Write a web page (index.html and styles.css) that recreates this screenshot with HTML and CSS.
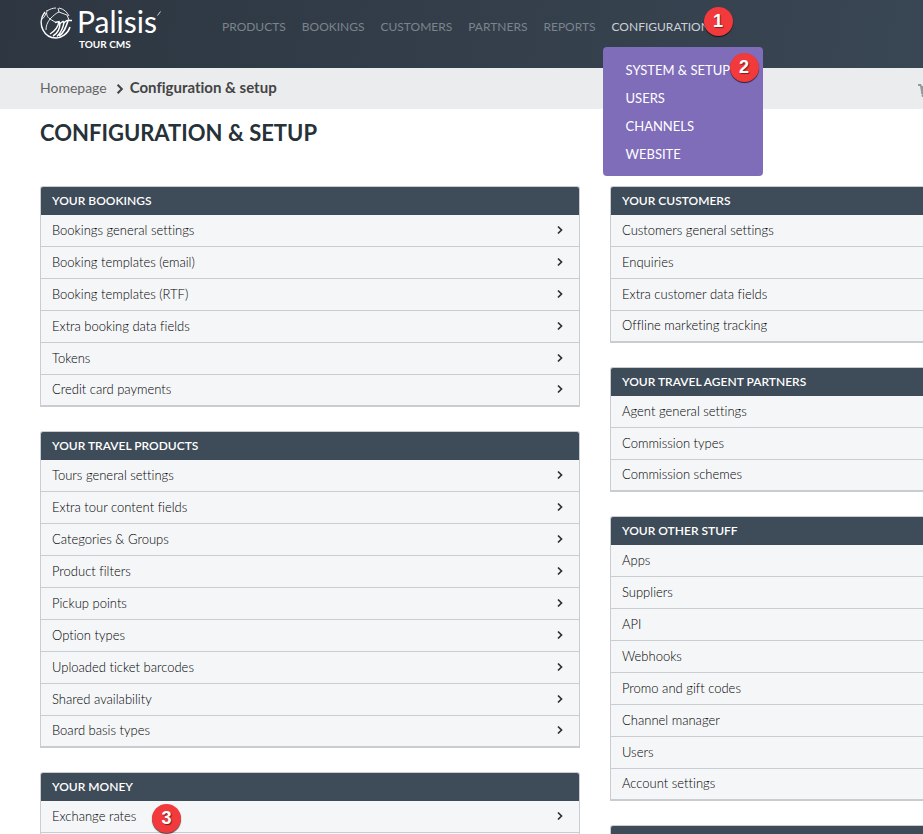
FILE: index.html
```
<!DOCTYPE html>
<html lang="en">
<head>
    <meta charset="UTF-8">
    <meta name="viewport" content="width=device-width, initial-scale=1.0">
    <title>Configuration & setup - TourCMS</title>
    <link rel="stylesheet" href="styles.css">
</head>
<body>
    <svg width="0" height="0" class="sprite">
        <symbol id="chevron" viewBox="0 0 8 10"><path d="M2 1.500L5.500 5L2 8.500" fill="none" stroke="currentColor" stroke-width="1.700"/></symbol>
    </svg>

    <header class="topbar">
        <a href="#" class="logo">
            <svg class="logo-mark" viewBox="0 0 33 33" fill="none" stroke="#fff">
                <path d="M5 5C1 10 0 17 3 23s8 8 13 8 12-4 14-11" stroke-width="1.500"/>
                <path d="M7 4c3-2 6-3 9-3M19 1c5 1 8 4 10 8" stroke-width="0.900"/>
                <path d="M7 3c-1 4 0 7 3 9 3-3 6-6 9-7l8 3 2 5M18 1l1 4M10 12l5 3M10 12c-3 4-4 7-4 11M1 13c3-2 4-4 5-7" stroke-width="0.900"/>
                <path d="M15 15.500l4-1 1 2 3-2 1 1 3-2 5 0" stroke-width="1.500"/>
                <path d="M19 15c-1 5-4 9-9 12" stroke-width="1.300"/>
                <path d="M20 16c0 5-2 10-7 13M24 15.500c-1 6-3 10-7 14M28 14c-2 6-4 12-9 15" stroke-width="1.500"/>
            </svg>
            <span class="logo-text">
                <span class="logo-name">Palisis</span>
                <span class="logo-sub">TOUR CMS</span>
            </span>
            <svg class="logo-tick" viewBox="0 0 4 5"><path d="M0.500 4.500L3.500 0.500" stroke="#fff" stroke-width="0.800"/></svg>
        </a>
        <nav class="nav">
            <a href="#">PRODUCTS</a>
            <a href="#">BOOKINGS</a>
            <a href="#">CUSTOMERS</a>
            <a href="#">PARTNERS</a>
            <a href="#">REPORTS</a>
            <div class="nav-open">
                <a href="#" class="active">CONFIGURATION</a>
                <span class="badge badge-nav">1</span>
                <div class="menu">
                    <a href="#">SYSTEM &amp; SETUP</a>
                    <a href="#">USERS</a>
                    <a href="#">CHANNELS</a>
                    <a href="#">WEBSITE</a>
                    <span class="badge badge-menu">2</span>
                </div>
            </div>
        </nav>
    </header>

    <div class="breadcrumb">
        <a href="#">Homepage</a>
        <svg class="crumb-arrow"><use href="#chevron"/></svg>
        <strong>Configuration &amp; setup</strong>
        <div class="cart">
            <svg viewBox="0 0 16 14" fill="#96999c"><path d="M0 1h3l1 2h11l-2 6H5l0 1h8v1H3V9L2 3H0z"/><circle cx="5" cy="12.500" r="1.500"/><circle cx="12" cy="12.500" r="1.500"/></svg>
        </div>
    </div>

    <main class="content">
        <h1>CONFIGURATION &amp; SETUP</h1>
        <div class="columns">
            <div class="column">
                <section class="panel">
                    <h2>YOUR BOOKINGS</h2>
                    <a href="#">Bookings general settings<svg><use href="#chevron"/></svg></a>
                    <a href="#">Booking templates (email)<svg><use href="#chevron"/></svg></a>
                    <a href="#">Booking templates (RTF)<svg><use href="#chevron"/></svg></a>
                    <a href="#">Extra booking data fields<svg><use href="#chevron"/></svg></a>
                    <a href="#">Tokens<svg><use href="#chevron"/></svg></a>
                    <a href="#">Credit card payments<svg><use href="#chevron"/></svg></a>
                </section>
                <section class="panel">
                    <h2>YOUR TRAVEL PRODUCTS</h2>
                    <a href="#">Tours general settings<svg><use href="#chevron"/></svg></a>
                    <a href="#">Extra tour content fields<svg><use href="#chevron"/></svg></a>
                    <a href="#">Categories &amp; Groups<svg><use href="#chevron"/></svg></a>
                    <a href="#">Product filters<svg><use href="#chevron"/></svg></a>
                    <a href="#">Pickup points<svg><use href="#chevron"/></svg></a>
                    <a href="#">Option types<svg><use href="#chevron"/></svg></a>
                    <a href="#">Uploaded ticket barcodes<svg><use href="#chevron"/></svg></a>
                    <a href="#">Shared availability<svg><use href="#chevron"/></svg></a>
                    <a href="#">Board basis types<svg><use href="#chevron"/></svg></a>
                </section>
                <section class="panel">
                    <h2>YOUR MONEY</h2>
                    <a href="#"><span class="marked">Exchange rates<span class="badge badge-row">3</span></span><svg><use href="#chevron"/></svg></a>
                    <a href="#"></a>
                </section>
            </div>
            <div class="column">
                <section class="panel">
                    <h2>YOUR CUSTOMERS</h2>
                    <a href="#">Customers general settings<svg><use href="#chevron"/></svg></a>
                    <a href="#">Enquiries<svg><use href="#chevron"/></svg></a>
                    <a href="#">Extra customer data fields<svg><use href="#chevron"/></svg></a>
                    <a href="#">Offline marketing tracking<svg><use href="#chevron"/></svg></a>
                </section>
                <section class="panel">
                    <h2>YOUR TRAVEL AGENT PARTNERS</h2>
                    <a href="#">Agent general settings<svg><use href="#chevron"/></svg></a>
                    <a href="#">Commission types<svg><use href="#chevron"/></svg></a>
                    <a href="#">Commission schemes<svg><use href="#chevron"/></svg></a>
                </section>
                <section class="panel">
                    <h2>YOUR OTHER STUFF</h2>
                    <a href="#">Apps<svg><use href="#chevron"/></svg></a>
                    <a href="#">Suppliers<svg><use href="#chevron"/></svg></a>
                    <a href="#">API<svg><use href="#chevron"/></svg></a>
                    <a href="#">Webhooks<svg><use href="#chevron"/></svg></a>
                    <a href="#">Promo and gift codes<svg><use href="#chevron"/></svg></a>
                    <a href="#">Channel manager<svg><use href="#chevron"/></svg></a>
                    <a href="#">Users<svg><use href="#chevron"/></svg></a>
                    <a href="#">Account settings<svg><use href="#chevron"/></svg></a>
                </section>
                <section class="panel">
                    <h2></h2>
                </section>
            </div>
        </div>
    </main>
</body>
</html>
```
FILE: styles.css
```
* { box-sizing: border-box; }
body {
    margin: 0;
    overflow-x: hidden;
    font-family: Lato, sans-serif;
    font-size: 13px;
    font-variant-ligatures: none;
    color: #263238;
    background: #fff;
}
a { color: inherit; text-decoration: none; }
.sprite { position: absolute; }

/* Header */
.topbar {
    display: flex;
    height: 68px;
    padding-left: 40px;
    background: linear-gradient(100deg, #2d3641, #394653);
}
.logo { display: flex; width: 182px; padding-top: 4px; color: #fff; }
.logo-mark { width: 33px; height: 33px; margin: 3px 4px 0 0; }
.logo-text { display: flex; flex-direction: column; }
.logo-name { font-size: 30px; line-height: 34px; }
.logo-sub { padding-left: 2px; font-size: 10px; font-weight: bold; line-height: 12px; }
.logo-tick { width: 4px; height: 5px; margin-top: 7px; }
.nav { display: flex; gap: 16px; line-height: 20px; padding-top: 17px; font-size: 12px; color: #7b848c; }
.nav-open { position: relative; }
.active { color: #cdd1d5; }
.menu {
    position: absolute;
    top: 30px;
    left: -9px;
    z-index: 1;
    display: flex;
    flex-direction: column;
    width: 160px;
    padding: 9px 0 8px 23px;
    border-radius: 4px;
    background: #806dba;
    color: #fff;
    font-size: 13px;
    line-height: 28px;
}

/* Numbered markers */
.badge {
    position: absolute;
    z-index: 2;
    width: 29px;
    height: 29px;
    border-radius: 50%;
    background: #f23a3c;
    box-shadow: 0 1px 1px rgba(0, 0, 0, 0.7);
    color: #fff;
    font-family: "Liberation Sans", sans-serif;
    font-size: 18px;
    font-weight: bold;
    line-height: 29px;
    text-align: center;
    text-shadow: 1px 1px 1px rgba(0, 0, 0, 0.5);
}
.badge-nav { top: -10px; left: 92px; }
.badge-menu { top: 6px; right: 4px; }
.badge-row { top: -4px; left: 100px; }

/* Breadcrumb */
.breadcrumb {
    display: flex;
    align-items: center;
    min-width: 1190px;
    height: 41px;
    padding: 0 40px 3px;
    background: #ebecee;
    color: #444;
    font-size: 14px;
}
.breadcrumb a { color: #666; }
.breadcrumb strong { font-size: 15px; }
.crumb-arrow { width: 10px; height: 12px; margin: 3px 5px 0 8px; }
.cart { width: 232px; margin-left: auto; }
.cart svg { display: block; width: 16px; height: 14px; margin-top: 6px; }

/* Panels */
.content { padding: 8px 40px; }
h1 { margin: 0 0 38px; font-size: 22px; line-height: 31px; }
.columns { display: grid; grid-template-columns: repeat(2, minmax(540px, 1fr)); gap: 30px; }
.panel {
    margin-bottom: 24px;
    border: 1px solid #c9cdd2;
    border-bottom-width: 2px;
    border-radius: 3px 3px 0 0;
    background: #f4f6f8;
}
.panel h2 {
    height: 28px;
    margin: 0;
    padding-left: 11px;
    border-radius: 2px 2px 0 0;
    background: #3e4b58;
    color: #fff;
    font-size: 12px;
    font-weight: 600;
    line-height: 28px;
}
.panel > a {
    display: flex;
    align-items: center;
    justify-content: space-between;
    height: 32px;
    padding: 0 15px 2px 11px;
    border-bottom: 1px solid #c9cdd2;
    color: #000;
    font-weight: 300;
    font-size: 13px;
}
.panel > a:last-child { height: 30px; border-bottom: 0; }
.panel svg { width: 8px; height: 10px; color: #263238; }
.marked { position: relative; }
```
